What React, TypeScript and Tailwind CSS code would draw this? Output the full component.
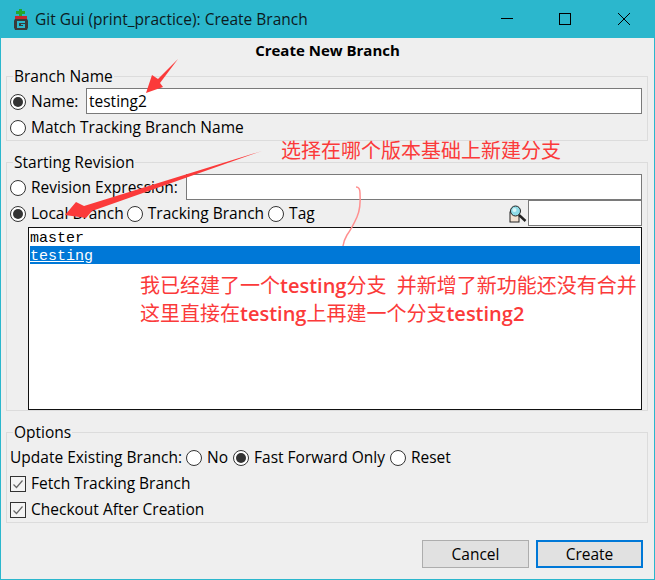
const FONT = 'font-["Open_Sans","Noto_Sans",sans-serif]';

function Radio({ checked = false }: { checked?: boolean }) {
  return (
    <span className="flex h-4 w-4 shrink-0 items-center justify-center rounded-full border border-[#333] bg-white">
      {checked && <span className="h-[10px] w-[10px] rounded-full bg-[#333]" />}
    </span>
  );
}

function Check() {
  return (
    <span className="flex h-4 w-4 shrink-0 items-center justify-center border border-[#333] bg-[#f4f4f4]">
      <svg width="12" height="10" viewBox="0 0 12 10" fill="none">
        <path d="M1.5 5.5 L4.5 8.5 L10.5 1.5" stroke="#666" strokeWidth="1.2" />
      </svg>
    </span>
  );
}

function Group({ title, className, children }: { title: string; className: string; children: React.ReactNode }) {
  return (
    <div className={`ml-[5px] mr-[6px] border border-[#dcdcdc] pl-[3px] pr-[5px] ${className}`}>
      <div className="ml-[3px] -mt-[12px] h-[23px] w-fit bg-[#efefef] px-px leading-[22px]">{title}</div>
      {children}
    </div>
  );
}

function Row({ children }: { children: React.ReactNode }) {
  return <div className="flex h-[26px] items-center pt-[2px]">{children}</div>;
}

function GitIcon() {
  return (
    <svg width="14" height="22" viewBox="0 0 14 22" className="shrink-0">
      <path d="M5 1h3v2h3v3H8v2H5V6H2V3h3z" fill="#21a82f" />
      <rect x="1" y="8" width="12" height="3" fill="#c4262e" />
      <path d="M1 11h12l1 1.5v7L13 22H1l-1-2.5v-7z" fill="#3a3a3a" />
      <path d="M3 13h8v2H5v3h4v-1H7v-1h4v4H3z" fill="#2bb7cd" />
    </svg>
  );
}

function Magnifier() {
  return (
    <svg width="18" height="18" viewBox="0 0 18 18">
      <rect x="1" y="7" width="9" height="10" fill="#f3e3d3" stroke="#222" strokeWidth="1" />
      <line x1="10" y1="10" x2="16.5" y2="16" stroke="#222" strokeWidth="2.4" />
      <circle cx="6.5" cy="6" r="5" fill="#8fdbe6" stroke="#222" strokeWidth="1" />
      <circle cx="5.5" cy="5" r="2" fill="#d9f5f8" />
    </svg>
  );
}

export default function App() {
  return (
    <div className={`relative h-[580px] w-[655px] overflow-hidden border border-t-0 border-[#2bb7cd] bg-[#efefef] text-[15.5px] text-black ${FONT}`}>
      <div className="-mx-px flex h-[38px] items-center bg-[#2bb7cd] pl-[14px]">
        <GitIcon />
        <span className="ml-[7px] pt-[2px] text-[15.5px] text-[#0b1a1d]">Git Gui (print_practice): Create Branch</span>
        <div className="ml-auto flex items-center">
          <svg width="14" height="14" viewBox="0 0 14 14" className="mr-[44px]">
            <line x1="1" y1="6.5" x2="13" y2="6.5" stroke="#000" />
          </svg>
          <svg width="14" height="14" viewBox="0 0 14 14" className="mr-[45px]">
            <rect x="1.5" y="1.5" width="11" height="11" fill="none" stroke="#000" />
          </svg>
          <svg width="14" height="14" viewBox="0 0 14 14" className="mr-[24px]">
            <path d="M1 1 L13 13 M13 1 L1 13" stroke="#000" />
          </svg>
        </div>
      </div>

      <div className="mt-px h-[22px] text-center text-[15px] font-bold leading-[22px]">Create New Branch</div>

      <Group title="Branch Name" className="mt-[15px] h-[65px]">
        <Row>
          <Radio checked />
          <span className="ml-[5px]">Name:</span>
          <input readOnly value="testing2" className="-mt-[2px] ml-auto h-[26px] w-[556px] border border-[#7a7a7a] bg-white px-[2px] text-[15.5px] text-black outline-none" />
        </Row>
        <Row>
          <Radio />
          <span className="ml-[5px]">Match Tracking Branch Name</span>
        </Row>
      </Group>

      <Group title="Starting Revision" className="mt-[21px] h-[249px]">
        <Row>
          <Radio />
          <span className="ml-[5px]">Revision Expression:</span>
          <input readOnly className="-mt-[2px] ml-auto h-[26px] w-[456px] border border-[#7a7a7a] bg-white outline-none" />
        </Row>
        <Row>
          <Radio checked />
          <span className="ml-[5px]">Local Branch</span>
          <span className="ml-[3px]"><Radio /></span>
          <span className="ml-[5px]">Tracking Branch</span>
          <span className="ml-[4px]"><Radio /></span>
          <span className="ml-[5px]">Tag</span>
          <span className="ml-auto mr-px flex"><Magnifier /></span>
          <input readOnly className="-mt-[2px] h-[26px] w-[114px] border border-[#7a7a7a] bg-white outline-none" />
        </Row>
        <div className="ml-[18px] mt-px h-[183px] border border-[#111] bg-white p-px font-['Liberation_Mono',monospace] text-[15px]">
          <div className="h-[17px] leading-[20px]">master</div>
          <div className="h-[18px] bg-[#0078d7] leading-[21px] text-white underline">testing</div>
        </div>
      </Group>

      <Group title="Options" className="mt-[21px] h-[91px]">
        <Row>
          <span>Update Existing Branch:</span>
          <span className="ml-[4px]"><Radio /></span>
          <span className="ml-[5px]">No</span>
          <span className="ml-[5px]"><Radio checked /></span>
          <span className="ml-[5px]">Fast Forward Only</span>
          <span className="ml-[5px]"><Radio /></span>
          <span className="ml-[5px]">Reset</span>
        </Row>
        <Row>
          <Check />
          <span className="ml-[5px]">Fetch Tracking Branch</span>
        </Row>
        <Row>
          <Check />
          <span className="ml-[5px]">Checkout After Creation</span>
        </Row>
      </Group>

      <div className="mr-[11px] mt-[17px] flex justify-end gap-[7px]">
        <button className="h-[28px] w-[107px] border border-[#adadad] bg-[#e1e1e1] pt-px">Cancel</button>
        <button className="h-[28px] w-[107px] border-2 border-[#0078d7] bg-[#e1e1e1] pt-px">Create</button>
      </div>

      {/* red annotations drawn over the screenshot */}
      <svg width="655" height="580" className="pointer-events-none absolute -left-px top-0">
        <polygon points="178,59 160,83 163,87 146,93 152,75 158,79" fill="#fb3a3a" />
        <polygon points="262,151 92,211 86,218 65,215 76,202 84,206" fill="#fb3a3a" />
        <path d="M356 187 Q360 187 360 193 Q361 208 357 217 Q352 228 347 235 Q344 240 343 246" fill="none" stroke="#ff9090" strokeWidth="1.5" />
      </svg>
      <div className="pointer-events-none absolute left-[280px] top-[136px] whitespace-pre font-['Noto_Sans_CJK_SC',sans-serif] text-[20px] leading-[28px] text-[#fb3a3a]">选择在哪个版本基础上新建分支</div>
      <div className="pointer-events-none absolute left-[139px] top-[272px] whitespace-pre font-['Open_Sans','Noto_Sans_CJK_SC',sans-serif] text-[20px] leading-[28px] text-[#fb3a3a]">
        <div>我已经建了一个<span className="font-semibold">testing</span>分支  并新增了新功能还没有合并</div>
        <div>这里直接在<span className="font-semibold">testing</span>上再建一个分支<span className="font-semibold">testing2</span></div>
      </div>
    </div>
  );
}
